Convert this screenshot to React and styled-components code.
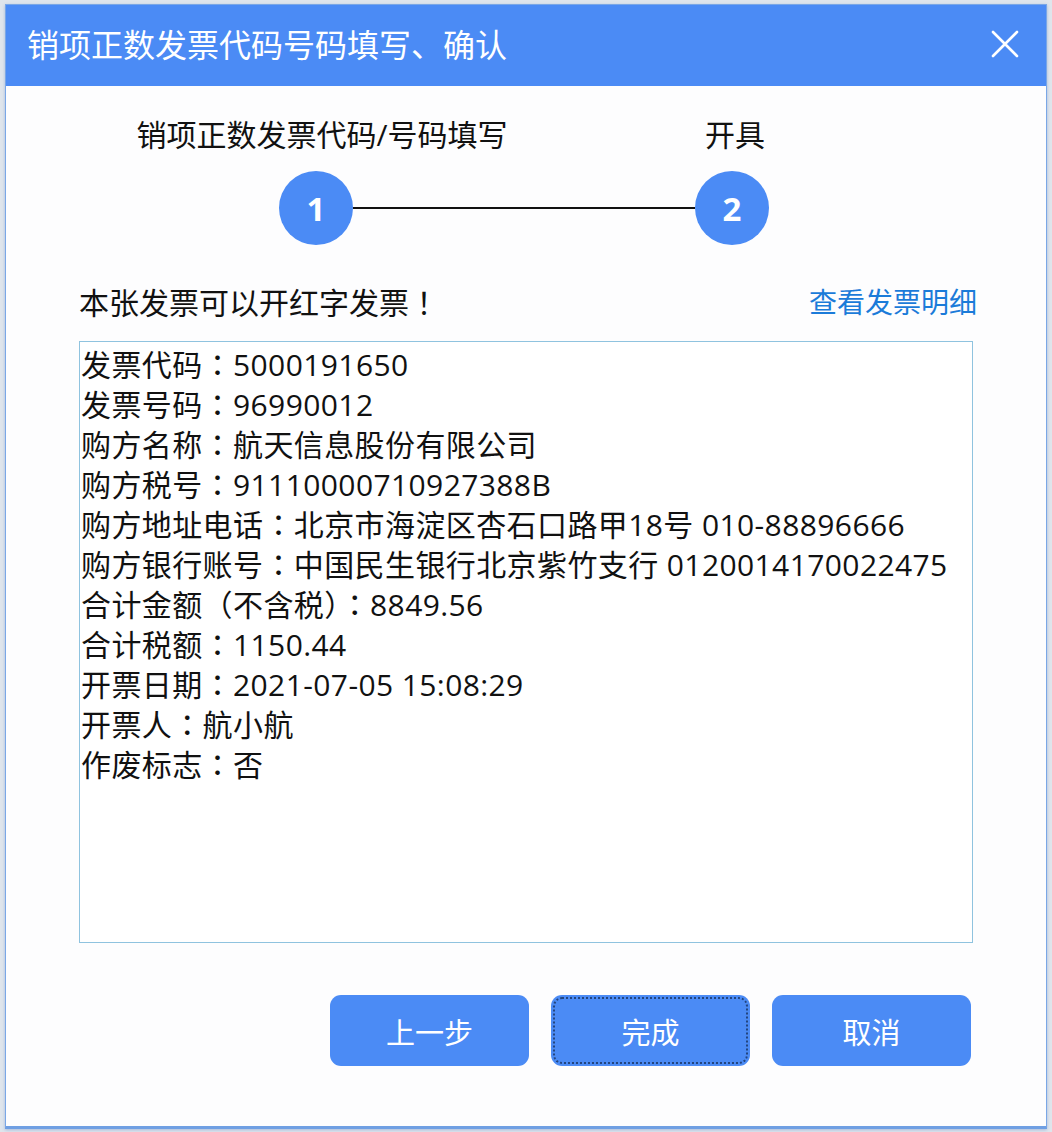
import React from 'react';
import styled, { createGlobalStyle } from 'styled-components';

const GlobalStyle = createGlobalStyle`
  html, body {
    margin: 0;
    padding: 0;
    background: #dfe5ec;
  }

  body {
    font-family: "Open Sans", "Noto Sans CJK SC", sans-serif;
    color: #111;
  }
`;

const Page = styled.div`
  width: 1052px;
  height: 1132px;
  padding: 4px 5px 3px 5px;
  box-sizing: border-box;
`;

const Dialog = styled.div`
  height: 100%;
  display: flex;
  flex-direction: column;
  background: #fdfdfe;
  border: 1px solid #7aa7e6;
  border-bottom: 3px solid #6f9fe3;
  box-sizing: border-box;
  box-shadow: 0 1px 3px rgba(60, 110, 190, 0.35);
`;

const TitleBar = styled.div`
  height: 81px;
  flex: none;
  display: flex;
  align-items: center;
  justify-content: space-between;
  padding: 0 26px 0 21px;
  background: #4b8bf5;
  color: #fff;
`;

const Title = styled.h1`
  margin: 0;
  font-size: 32px;
  font-weight: 400;
  line-height: 1;
  margin-top: -1px;
`;

const Close = styled.button`
  width: 30px;
  height: 30px;
  padding: 0;
  border: 0;
  background: none;
  cursor: pointer;
  display: flex;
  align-items: center;
  justify-content: center;
  margin-top: -4px;
`;

const Body = styled.div`
  flex: 1;
  display: flex;
  flex-direction: column;
  padding: 0 73px;
`;

const LabelRow = styled.div`
  display: grid;
  grid-template-columns: 380px 380px;
  column-gap: 33px;
  margin: 30px 0 0 53px;
`;

const StepLabel = styled.div`
  text-align: center;
  font-size: 30px;
  line-height: 38px;
  white-space: nowrap;
`;

const CircleRow = styled.div`
  display: flex;
  align-items: center;
  margin: 17px 0 0 200px;
`;

const Circle = styled.div`
  width: 74px;
  height: 74px;
  flex: none;
  border-radius: 50%;
  background: #4b8bf5;
  color: #fff;
  font-size: 33px;
  font-weight: 700;
  display: flex;
  align-items: center;
  justify-content: center;
`;

const Connector = styled.div`
  width: 342px;
  height: 2px;
  background: #111;
`;

const Notice = styled.div`
  display: flex;
  align-items: center;
  justify-content: space-between;
  margin: 38px -4px 0 0;
  height: 36px;
`;

const NoticeText = styled.span`
  font-size: 30px;
`;

const Punct = styled.span`
  font-family: "Noto Sans CJK TC", "Noto Sans CJK SC", sans-serif;
  line-height: 1;
`;

const DetailLink = styled.a`
  font-size: 28px;
  color: #1b7bd9;
  text-decoration: none;
  cursor: pointer;
`;

const InfoBox = styled.div`
  margin-top: 22px;
  height: 602px;
  box-sizing: border-box;
  border: 1px solid #8fc3df;
  padding: 3px 0 0 1px;
  background: #fff;
`;

const InfoLine = styled.div`
  height: 40px;
  font-size: 30px;
  letter-spacing: 0.4px;
  line-height: 40px;
  white-space: nowrap;
`;

const Footer = styled.div`
  display: flex;
  justify-content: flex-end;
  gap: 22px;
  margin: 52px 2px 0 0;
`;

const Button = styled.button`
  width: 199px;
  height: 71px;
  border: 0;
  border-radius: 11px;
  background: #4b8bf5;
  color: #fff;
  font-family: "Open Sans", "Noto Sans CJK SC", sans-serif;
  font-size: 29px;
  cursor: pointer;
  outline: ${(p) => (p.$focused ? '2px dotted #23457f' : 'none')};
  outline-offset: -4px;
`;

const info = [
  ['发票代码', '5000191650'],
  ['发票号码', '96990012'],
  ['购方名称', '航天信息股份有限公司'],
  ['购方税号', '91110000710927388B'],
  ['购方地址电话', '北京市海淀区杏石口路甲18号 010-88896666'],
  ['购方银行账号', '中国民生银行北京紫竹支行 0120014170022475'],
  [<>合计金额<Punct>（</Punct>不含税<Punct>）</Punct></>, '8849.56'],
  ['合计税额', '1150.44'],
  ['开票日期', '2021-07-05 15:08:29'],
  ['开票人', '航小航'],
  ['作废标志', '否'],
];

const App = () => (
  <Page>
    <GlobalStyle />
    <Dialog>
      <TitleBar>
        <Title>销项正数发票代码号码填写、确认</Title>
        <Close aria-label="关闭">
          <svg width="28" height="28" viewBox="0 0 28 28">
            <path d="M2 2 L26 26 M26 2 L2 26" stroke="#fff" strokeWidth="2.6" strokeLinecap="round" />
          </svg>
        </Close>
      </TitleBar>

      <Body>
        <LabelRow>
          <StepLabel>销项正数发票代码/号码填写</StepLabel>
          <StepLabel>开具</StepLabel>
        </LabelRow>
        <CircleRow>
          <Circle>1</Circle>
          <Connector />
          <Circle>2</Circle>
        </CircleRow>

        <Notice>
          <NoticeText>本张发票可以开红字发票<Punct>！</Punct></NoticeText>
          <DetailLink>查看发票明细</DetailLink>
        </Notice>

        <InfoBox>
          {info.map(([k, v], i) => (
            <InfoLine key={i}>
              {k}<Punct>：</Punct>{v}
            </InfoLine>
          ))}
        </InfoBox>

        <Footer>
          <Button>上一步</Button>
          <Button $focused>完成</Button>
          <Button>取消</Button>
        </Footer>
      </Body>
    </Dialog>
  </Page>
);

export default App;
